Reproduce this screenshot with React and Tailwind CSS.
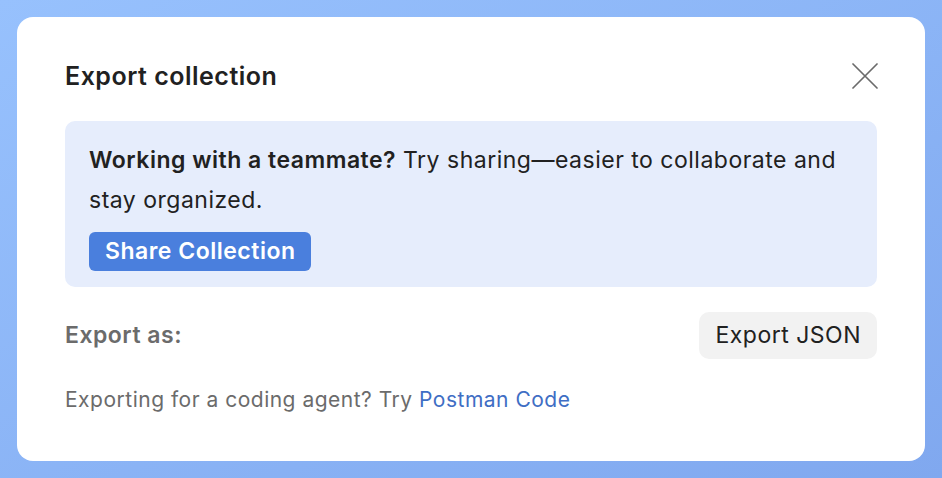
export default function App() {
  return (
    <div className="w-[942px] h-[478px] bg-gradient-to-br from-[#97c1fd] to-[#80a8ef] p-[17px]" style={{ fontFamily: 'Inter, "Noto Sans", sans-serif' }}>
      <div className="w-[908px] h-[444px] bg-white rounded-[16px] px-[48px] pt-[40px]">
        <div className="flex items-center justify-between h-[40px]">
          <h1 className="text-[25px] font-semibold text-[#212121] tracking-[0.5px]">Export collection</h1>
          <svg width="26" height="26" viewBox="0 0 26 26" className="mr-[-1px] mt-[-2px]">
            <path d="M1 1L25 25M25 1L1 25" stroke="#6b6b6b" strokeWidth="1.7" strokeLinecap="round" />
          </svg>
        </div>
        <div className="mt-[24px] bg-[#e6edfc] rounded-[10px] px-[24px] pt-[19px] pb-[16px]">
          <p className="text-[23px] leading-[40px] text-[#212121] tracking-[0.5px]">
            <span className="font-semibold">Working with a teammate?</span> Try sharing—easier to collaborate and stay organized.
          </p>
          <button className="mt-[12px] h-[39px] px-[16px] bg-[#4a7fdd] rounded-[6px] text-white text-[23px] font-semibold tracking-[0.5px]">Share Collection</button>
        </div>
        <div className="mt-[25px] flex items-center justify-between">
          <span className="text-[23px] font-semibold text-[#6b6b6b] tracking-[0.5px]">Export as:</span>
          <button className="h-[47px] px-[16px] bg-[#f2f2f2] rounded-[10px] text-[23px] text-[#212121] tracking-[0.5px]">Export JSON</button>
        </div>
        <p className="mt-[27px] text-[21px] leading-[28px] text-[#6b6b6b] tracking-[0.5px]">
          Exporting for a coding agent? Try <span className="text-[#3f6ec4]">Postman Code</span>
        </p>
      </div>
    </div>
  );
}
